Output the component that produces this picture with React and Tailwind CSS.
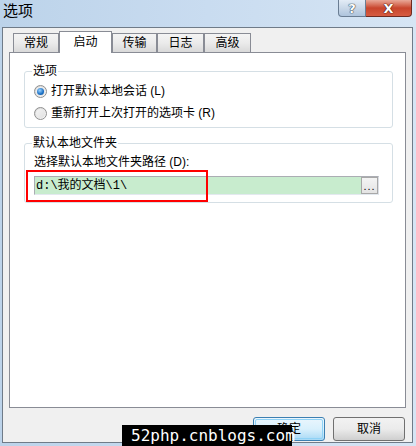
import React from "react";

const CJK = { fontFamily: '"Liberation Sans", "Noto Sans CJK SC", sans-serif' };
const MONO = { fontFamily: '"Liberation Mono", "Noto Sans CJK SC", monospace' };

function Radio({ checked, label }) {
  return (
    <div className="flex items-center h-[22px]">
      <span className="relative w-[13px] h-[13px] rounded-full border border-[#8f8f8f] bg-gradient-to-br from-[#d4d4d4] to-[#fbfbfb] flex items-center justify-center shrink-0">
        <span className="w-[9px] h-[9px] rounded-full bg-gradient-to-br from-[#f4f4f4] to-[#e1e1e1] flex items-center justify-center">
          {checked && (
            <span className="w-[7px] h-[7px] rounded-full bg-[radial-gradient(circle_at_40%_35%,#9bd3ff,#1a6fc4_60%,#0d4f94)]" />
          )}
        </span>
      </span>
      <span className="ml-[4px] text-[12px] leading-[14px] text-black whitespace-nowrap">{label}</span>
    </div>
  );
}

export default function App() {
  const tabs = [
    { t: "常规", w: "w-[46px]" },
    { t: "启动", w: "w-[53px]", sel: true },
    { t: "传输", w: "w-[45px]" },
    { t: "日志", w: "w-[47px]" },
    { t: "高级", w: "w-[47px]" },
  ];
  return (
    <div
      className="relative w-[416px] h-[446px] overflow-hidden flex flex-col bg-gradient-to-r from-[#bcd3ea] via-[#c9dcf0] to-[#d6e5f4]"
      style={CJK}
    >
      {/* title bar */}
      <div className="h-[27px] shrink-0 flex items-start justify-between">
        <span className="ml-[3px] mt-[2px] text-[15px] leading-[18px] text-black">选项</span>
        <div className="flex mr-[4px]">
          <div className="w-[28px] h-[17px] rounded-bl-[4px] border border-t-0 border-[#6a7d93] bg-gradient-to-b from-[#e3ecf6] via-[#c9d8e8] to-[#aec4dc] flex items-center justify-center">
            <span
              className="text-[13px] leading-[13px] font-bold text-white"
              style={{ fontFamily: '"DejaVu Sans", sans-serif', textShadow: "0 0 1px #30404f, 0 0 1px #30404f, 0 0 1px #30404f" }}
            >
              ?
            </span>
          </div>
          <div className="w-[46px] h-[17px] rounded-br-[4px] border border-t-0 border-l-0 border-[#6e2a20] bg-gradient-to-b from-[#e8a898] via-[#c8452c] to-[#d65c42] flex items-center justify-center">
            <span
              className="text-[13px] leading-[13px] font-bold text-white"
              style={{ fontFamily: '"DejaVu Sans", sans-serif', textShadow: "0 0 1px #4a1208, 0 0 1px #4a1208, 0 0 1px #4a1208" }}
            >
              X
            </span>
          </div>
        </div>
      </div>

      {/* client area */}
      <div className="flex-1 ml-[2px] mr-[3px] mb-[3px] border border-[#6f7b88] bg-[#f0f0f0] flex flex-col">
        {/* tabs */}
        <div className="relative z-10 flex items-end h-[22px] mt-[3px] ml-[8px] -mb-[1px]">
          {tabs.map((tab, i) => (
            <div
              key={i}
              className={
                tab.sel
                  ? `${tab.w} h-[22px] bg-white border border-b-0 border-[#898c95] flex items-start justify-center pt-[3px]`
                  : `${tab.w} h-[20px] border border-[#898c95] bg-gradient-to-b from-[#f4f4f4] via-[#ebebeb] to-[#d9d9d9] flex items-start justify-center pt-[2px] ${i === 0 ? "ml-[2px]" : ""}`
              }
            >
              <span className="text-[12px] leading-[14px] text-black">{tab.t}</span>
            </div>
          ))}
        </div>

        {/* panel */}
        <div className="ml-[6px] w-[397px] h-[356px] bg-white border border-[#898c95] flex flex-col">
          <fieldset className="mt-[11px] ml-[14px] mr-[12px] border border-[#d5dfe5] rounded-[3px] pl-[9px] pr-[10px] pt-[2px] pb-[3px] min-w-0">
            <legend className="-ml-[2px] px-[1px] text-[12px] leading-[14px] text-black">选项</legend>
            <Radio checked label="打开默认本地会话 (L)" />
            <Radio label="重新打开上次打开的选项卡 (R)" />
          </fieldset>

          <fieldset className="mt-[8px] ml-[14px] mr-[12px] border border-[#d5dfe5] rounded-[3px] pl-[9px] pr-[13px] pt-[5px] pb-[7px] min-w-0">
            <legend className="-ml-[2px] px-[1px] text-[12px] leading-[14px] text-black">默认本地文件夹</legend>
            <div className="text-[12px] leading-[14px] text-black whitespace-nowrap">选择默认本地文件夹路径 (D):</div>
            <div className="mt-[7px] h-[19px] flex border border-[#abadb3] border-b-[#e3e9ef] border-r-[#dbdfe6]">
              <div className="flex-1 bg-[#c8ecce] flex items-center pl-[1px]">
                <span className="text-[12px] leading-[14px] text-black" style={MONO}>d:\我的文档\1\</span>
              </div>
              <div className="w-[17px] border border-[#a8a8a8] bg-gradient-to-b from-[#f4f4f4] to-[#e4e4e4] flex items-end justify-center">
                <span className="text-[11px] leading-[13px] text-black tracking-[1px]">...</span>
              </div>
            </div>
          </fieldset>
        </div>

        {/* buttons */}
        <div className="mt-[9px] mr-[7px] flex justify-end gap-[8px]">
          <div className="w-[72px] h-[24px] rounded-[3px] border border-[#3c7fb1] bg-gradient-to-b from-[#eaf6fd] via-[#d9f0fc] to-[#a7d9f5] p-[1px]">
            <div className="w-full h-full rounded-[2px] border border-[#8fd2f6] flex items-center justify-center">
              <span className="text-[12px] leading-[14px] text-black">确定</span>
            </div>
          </div>
          <div className="w-[72px] h-[24px] rounded-[3px] border border-[#707070] bg-gradient-to-b from-[#f2f2f2] via-[#ebebeb] to-[#cfcfcf] flex items-center justify-center">
            <span className="text-[12px] leading-[14px] text-black">取消</span>
          </div>
        </div>
      </div>

      {/* red annotation box */}
      <div className="absolute left-[26px] top-[170px] w-[182px] h-[32px] border-2 border-[#ff0000]" />

      {/* watermark */}
      <div className="absolute left-[122px] top-[425px] w-[170px] h-[21px] bg-black flex items-center pl-[9px]">
        <span className="text-white text-[16px] leading-[20px]" style={{ fontFamily: '"DejaVu Sans Mono", monospace' }}>
          52php.cnblogs.com
        </span>
      </div>
    </div>
  );
}
